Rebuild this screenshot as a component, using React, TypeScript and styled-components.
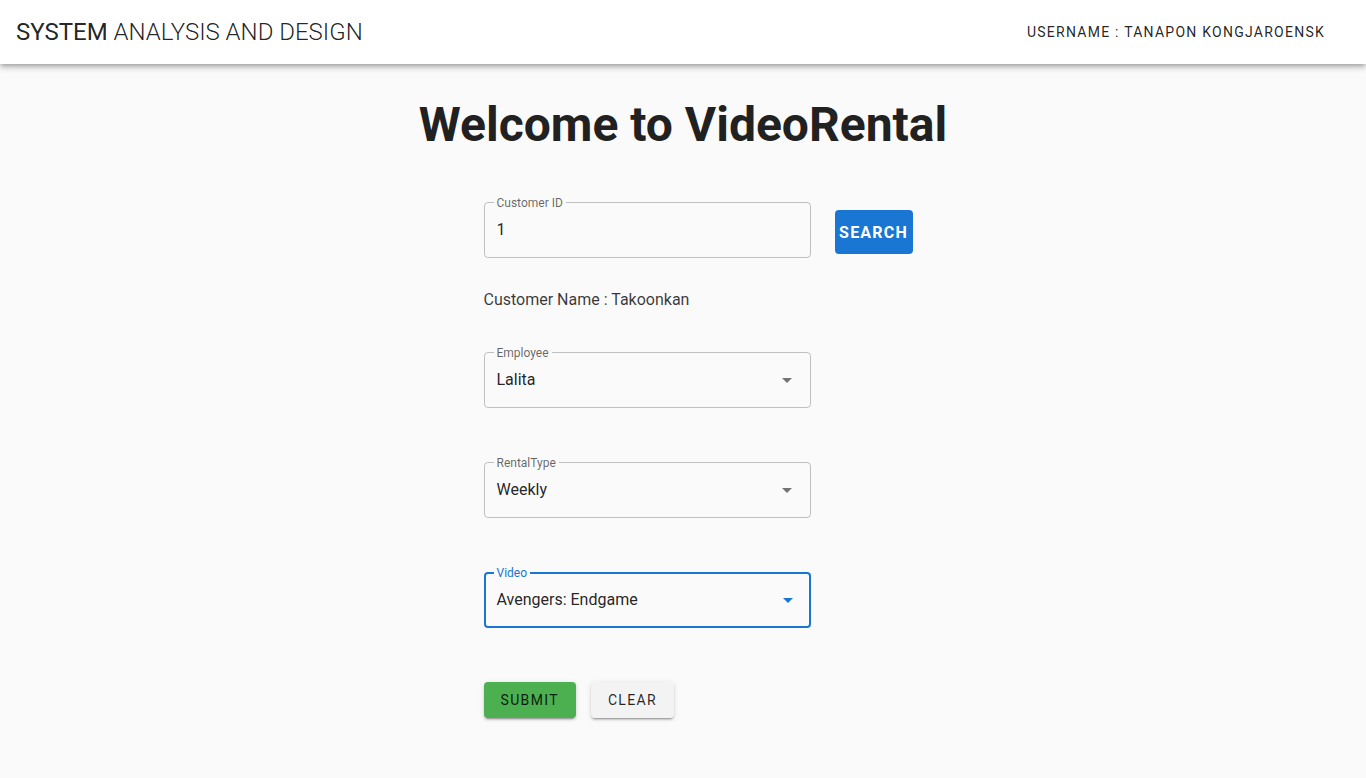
import React from "react";
import styled, { createGlobalStyle } from "styled-components";

const Global = createGlobalStyle`
  html, body { margin: 0; padding: 0; background: #fafafa; }
  body { font-family: Roboto, "Noto Sans", Arial, sans-serif; color: rgba(0,0,0,0.87); }
  * { box-sizing: border-box; }
`;

const Page = styled.div`
  min-height: 778px;
  background: #fafafa;
  display: flex;
  flex-direction: column;
`;

const AppBar = styled.header`
  height: 64px;
  background: #fff;
  display: flex;
  align-items: center;
  justify-content: space-between;
  padding: 0 41px 0 16px;
  box-shadow: 0 2px 4px -1px rgba(0,0,0,0.2), 0 4px 5px 0 rgba(0,0,0,0.14), 0 1px 10px 0 rgba(0,0,0,0.12);
  position: relative;
  z-index: 1;
`;

const Brand = styled.div`
  font-size: 24px;
  font-weight: 400;
  color: rgba(0,0,0,0.87);
  span { font-weight: 300; }
`;

const UserLabel = styled.div`
  font-size: 14px;
  font-weight: 400;
  letter-spacing: 1.25px;
  text-transform: uppercase;
  color: rgba(0,0,0,0.87);
`;

const Main = styled.main`
  display: flex;
  flex-direction: column;
  align-items: center;
`;

const Title = styled.h1`
  margin: 32px 0 49px;
  font-size: 48px;
  font-weight: 700;
  line-height: normal;
  color: #212121;
`;

const Form = styled.div`
  width: 429px;
  margin-left: 30px;
  display: flex;
  flex-direction: column;
`;

const Row = styled.div`
  display: flex;
  align-items: flex-start;
  gap: 24px;
`;

const Field = styled.div<{ $focused?: boolean }>`
  position: relative;
  width: 327px;
  height: 56px;
  border: ${(p) => (p.$focused ? "2px solid #1976d2" : "1px solid rgba(0,0,0,0.23)")};
  border-radius: 4px;
  display: flex;
  align-items: center;
  padding: 0 ${(p) => (p.$focused ? "11px" : "12px")};
  font-size: 16px;
  color: rgba(0,0,0,0.87);
`;

const Label = styled.span<{ $focused?: boolean }>`
  position: absolute;
  top: ${(p) => (p.$focused ? "-8px" : "-7px")};
  left: ${(p) => (p.$focused ? "8px" : "9px")};
  padding: 0 3px;
  background: #fafafa;
  font-size: 12px;
  line-height: 14px;
  color: ${(p) => (p.$focused ? "#1976d2" : "rgba(0,0,0,0.6)")};
`;

const Value = styled.span`
  flex: 1;
  margin-bottom: 2px;
`;

const Arrow = styled.svg<{ $focused?: boolean }>`
  width: 24px;
  height: 24px;
  margin-right: ${(p) => (p.$focused ? "-2px" : "-1px")};
  fill: ${(p) => (p.$focused ? "#1976d2" : "rgba(0,0,0,0.54)")};
`;

const SearchButton = styled.button`
  margin-top: 8px;
  height: 44px;
  width: 78px;
  border: none;
  border-radius: 4px;
  background: #1976d2;
  color: #fff;
  font-family: Roboto, sans-serif;
  font-size: 16px;
  font-weight: 700;
  letter-spacing: 1.2px;
  padding: 0;
  text-transform: uppercase;
`;

const NameText = styled.div`
  margin-top: 30px;
  font-size: 16px;
  line-height: 24px;
  color: rgba(0,0,0,0.78);
`;

const Spacer = styled.div<{ $h: number }>`
  height: ${(p) => p.$h}px;
`;

const Actions = styled.div`
  display: flex;
  gap: 15px;
`;

const ActionButton = styled.button<{ $variant: "green" | "grey" }>`
  height: 36px;
  min-width: 64px;
  padding: 0 17px;
  border: none;
  border-radius: 4px;
  background: ${(p) => (p.$variant === "green" ? "#4caf50" : "#f3f3f3")};
  color: rgba(0,0,0,0.85);
  font-family: Roboto, sans-serif;
  font-size: 14px;
  font-weight: 400;
  letter-spacing: 1.35px;
  text-transform: uppercase;
  box-shadow: 0 3px 1px -2px rgba(0,0,0,0.2), 0 2px 2px 0 rgba(0,0,0,0.14), 0 1px 5px 0 rgba(0,0,0,0.12);
`;

const DropArrow = ({ focused }: { focused?: boolean }) => (
  <Arrow $focused={focused} viewBox="0 0 24 24">
    <path d="M7 10l5 5 5-5z" />
  </Arrow>
);

const SelectField = ({ label, value, focused }: { label: string; value: string; focused?: boolean }) => (
  <Field $focused={focused}>
    <Label $focused={focused}>{label}</Label>
    <Value>{value}</Value>
    <DropArrow focused={focused} />
  </Field>
);

export default function App() {
  return (
    <>
      <Global />
      <Page>
        <AppBar>
          <Brand>
            SYSTEM <span>ANALYSIS AND DESIGN</span>
          </Brand>
          <UserLabel>Username : Tanapon Kongjaroensk</UserLabel>
        </AppBar>
        <Main>
          <Title>Welcome to VideoRental</Title>
          <Form>
            <Row>
              <Field>
                <Label>Customer ID</Label>
                <Value>1</Value>
              </Field>
              <SearchButton>Search</SearchButton>
            </Row>
            <NameText>Customer Name : Takoonkan</NameText>
            <Spacer $h={40} />
            <SelectField label="Employee" value="Lalita" />
            <Spacer $h={54} />
            <SelectField label="RentalType" value="Weekly" />
            <Spacer $h={54} />
            <SelectField label="Video" value="Avengers: Endgame" focused />
            <Spacer $h={54} />
            <Actions>
              <ActionButton $variant="green">Submit</ActionButton>
              <ActionButton $variant="grey">Clear</ActionButton>
            </Actions>
          </Form>
        </Main>
      </Page>
    </>
  );
}
